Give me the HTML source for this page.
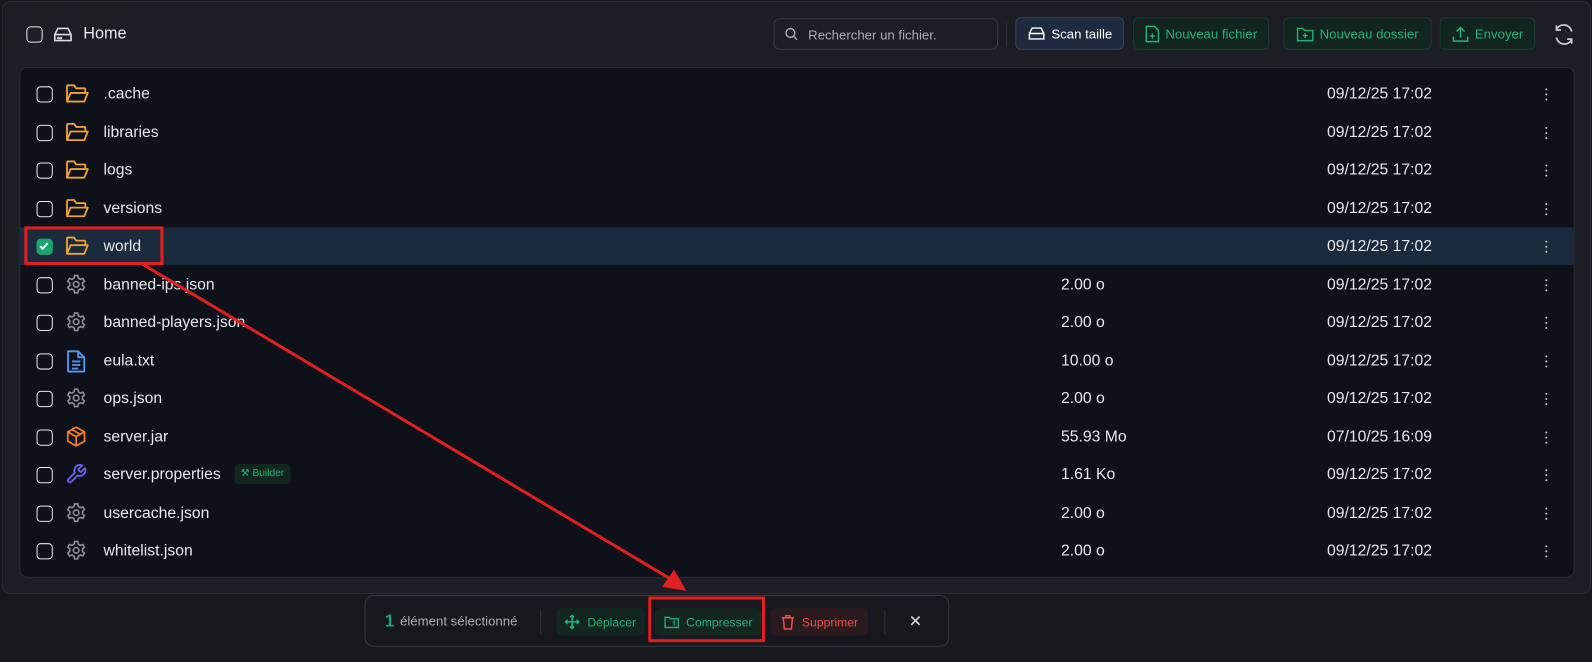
<!DOCTYPE html>
<html><head><meta charset="utf-8"><style>
*{box-sizing:border-box;margin:0;padding:0}
body{width:1592px;height:652px;background:#16181b;font-family:"Liberation Sans",sans-serif;color:#e6e8ec;position:relative;overflow:hidden}
#w{position:absolute;left:0;top:0;width:1568px;height:642px;transform:scale(1.0153);transform-origin:0 0}
.panel{position:absolute;left:2px;top:1px;width:1565px;height:584px;background:#1b1e24;border:1px solid #262a32;border-radius:8px}
.cb{position:absolute;width:16px;height:16px;border:1.5px solid #e6e8ec;border-radius:4px}
.list{position:absolute;left:19px;top:66px;width:1532px;height:503px;background:#0e111a;border:1px solid #262b35;border-radius:8px}
.row{position:absolute;left:0;width:1530px;height:37px;font-size:15.5px}
.row .cb{left:16px;top:11px}
.row .ic{position:absolute;left:44px;top:7px}
.row .nm{position:absolute;left:82px;top:10px}
.row .sz{position:absolute;left:1025px;top:10px}
.row .dt{position:absolute;left:1287px;top:10px}
.row .dots{position:absolute;left:1502px;top:13px;width:3px}
.dots i{display:block;width:2px;height:2px;background:#c0c4cc;margin:0 0 3px 0;border-radius:1px}
.sel{background:#1c2a3e}
.btn{position:absolute;top:17px;height:32px;border-radius:5px;font-size:13px;display:flex;align-items:center;justify-content:center;gap:6px}
.g{background:#12261f;border:1px solid #1d3a2e;color:#22b27a}
.bar{position:absolute;left:359px;top:586px;width:576px;height:51px;border:1px solid #333a46;border-radius:9px;background:#16181d}
.bb{position:absolute;top:12px;height:27px;border-radius:5px;font-size:12px;display:flex;align-items:center;justify-content:center;gap:7px}
</style></head><body><div id="w">
<div class="panel"></div>
<div class="cb" style="left:26px;top:26px"></div>
<svg style="position:absolute;left:52px;top:25px" width="20" height="18" viewBox="0 0 20 18" fill="none" stroke="#d8dbe0" stroke-width="1.6"><path d="M2 9 L5 3 H15 L18 9 V15 H2 Z M2 9 H18"/><circle cx="5.5" cy="12.5" r=".5"/><circle cx="8" cy="12.5" r=".5"/></svg>
<div style="position:absolute;left:82px;top:25px;font-size:16px">Home</div>

<div style="position:absolute;left:762px;top:18px;width:221px;height:31px;border:1px solid #353b46;border-radius:6px;background:#1b1e24;font-size:13px;color:#a8adb6;padding:8px 0 0 33px">Rechercher un fichier.</div>
<svg style="position:absolute;left:773px;top:27px" width="13" height="13" viewBox="0 0 13 13" fill="none" stroke="#a8adb6" stroke-width="1.4"><circle cx="5.5" cy="5.5" r="4.3"/><path d="M9 9l3 3"/></svg>
<div style="position:absolute;left:991px;top:22px;width:1px;height:24px;background:#2c313a"></div>
<div class="btn" style="left:1000px;width:107px;background:#1e2a3e;border:1px solid #334258;color:#fff">
<svg width="18" height="16" viewBox="0 0 20 18" fill="none" stroke="#fff" stroke-width="1.6"><path d="M2 9 L5 3 H15 L18 9 V15 H2 Z M2 9 H18"/></svg>Scan taille</div>
<div class="btn g" style="left:1116px;width:134px">
<svg width="14" height="17" viewBox="0 0 14 17" fill="none" stroke="#22b27a" stroke-width="1.4"><path d="M1 1H9L13 5V16H1Z M7 8V13 M4.5 10.5H9.5"/></svg>Nouveau fichier</div>
<div class="btn g" style="left:1264px;width:146px">
<svg width="17" height="15" viewBox="0 0 17 15" fill="none" stroke="#22b27a" stroke-width="1.4"><path d="M1 2H6L8 4H16V14H1Z M8.5 6.5V11.5 M6 9H11"/></svg>Nouveau dossier</div>
<div class="btn g" style="left:1418px;width:94px">
<svg width="17" height="17" viewBox="0 0 17 17" fill="none" stroke="#22b27a" stroke-width="1.5"><path d="M8.5 12V2 M4.5 6l4-4 4 4 M1.5 11v4.5h14V11"/></svg>Envoyer</div>
<svg style="position:absolute;left:1529px;top:22px" width="23" height="24" viewBox="0 0 23 24" fill="none" stroke="#c8ccd4" stroke-width="1.7"><path d="M19 9A8 8 0 0 0 4 7 M4 3v4.5h4.5 M4 15a8 8 0 0 0 15 2 M19 21v-4.5h-4.5"/></svg>

<div class="list">
<div class="row" style="top:7px"><div class="cb"></div><svg class="ic" width="24" height="22" viewBox="0 0 24 22" fill="none" stroke="#f0a332" stroke-width="1.8" stroke-linejoin="round"><path d="M2 19V4a1 1 0 0 1 1-1h6l2 3h8a1 1 0 0 1 1 1v3 M2 19l3.5-8.5h17L19 19Z"/></svg><span class="nm">.cache</span><span class="dt">09/12/25 17:02</span><span class="dots"><i></i><i></i><i></i></span></div>
<div class="row" style="top:44.5px"><div class="cb"></div><svg class="ic" width="24" height="22" viewBox="0 0 24 22" fill="none" stroke="#f0a332" stroke-width="1.8" stroke-linejoin="round"><path d="M2 19V4a1 1 0 0 1 1-1h6l2 3h8a1 1 0 0 1 1 1v3 M2 19l3.5-8.5h17L19 19Z"/></svg><span class="nm">libraries</span><span class="dt">09/12/25 17:02</span><span class="dots"><i></i><i></i><i></i></span></div>
<div class="row" style="top:82px"><div class="cb"></div><svg class="ic" width="24" height="22" viewBox="0 0 24 22" fill="none" stroke="#f0a332" stroke-width="1.8" stroke-linejoin="round"><path d="M2 19V4a1 1 0 0 1 1-1h6l2 3h8a1 1 0 0 1 1 1v3 M2 19l3.5-8.5h17L19 19Z"/></svg><span class="nm">logs</span><span class="dt">09/12/25 17:02</span><span class="dots"><i></i><i></i><i></i></span></div>
<div class="row" style="top:119.5px"><div class="cb"></div><svg class="ic" width="24" height="22" viewBox="0 0 24 22" fill="none" stroke="#f0a332" stroke-width="1.8" stroke-linejoin="round"><path d="M2 19V4a1 1 0 0 1 1-1h6l2 3h8a1 1 0 0 1 1 1v3 M2 19l3.5-8.5h17L19 19Z"/></svg><span class="nm">versions</span><span class="dt">09/12/25 17:02</span><span class="dots"><i></i><i></i><i></i></span></div>
<div class="row sel" style="top:157px"><div class="cb" style="background:#1aa56f;border-color:#1aa56f"><svg width="13" height="13" viewBox="0 0 13 13" style="position:absolute;left:0;top:0" fill="none" stroke="#fff" stroke-width="1.8"><path d="M2.5 6.5l2.5 2.5 5-5.5"/></svg></div><svg class="ic" width="24" height="22" viewBox="0 0 24 22" fill="none" stroke="#f0a332" stroke-width="1.8" stroke-linejoin="round"><path d="M2 19V4a1 1 0 0 1 1-1h6l2 3h8a1 1 0 0 1 1 1v3 M2 19l3.5-8.5h17L19 19Z"/></svg><span class="nm">world</span><span class="dt">09/12/25 17:02</span><span class="dots"><i></i><i></i><i></i></span></div>
<div class="row" style="top:194.5px"><div class="cb"></div><svg class="ic" width="22" height="22" viewBox="0 0 24 24" fill="none" stroke="#8d929b" stroke-width="1.7"><path d="M10.3 2.6h3.4l.6 2.8 2.2 1.3 2.7-.9 1.7 2.9-2.1 1.9v2.6l2.1 1.9-1.7 2.9-2.7-.9-2.2 1.3-.6 2.8h-3.4l-.6-2.8-2.2-1.3-2.7.9-1.7-2.9 2.1-1.9v-2.6L3.1 8.7l1.7-2.9 2.7.9 2.2-1.3Z"/><circle cx="12" cy="12" r="3"/></svg><span class="nm">banned-ips.json</span><span class="sz">2.00 o</span><span class="dt">09/12/25 17:02</span><span class="dots"><i></i><i></i><i></i></span></div>
<div class="row" style="top:232px"><div class="cb"></div><svg class="ic" width="22" height="22" viewBox="0 0 24 24" fill="none" stroke="#8d929b" stroke-width="1.7"><path d="M10.3 2.6h3.4l.6 2.8 2.2 1.3 2.7-.9 1.7 2.9-2.1 1.9v2.6l2.1 1.9-1.7 2.9-2.7-.9-2.2 1.3-.6 2.8h-3.4l-.6-2.8-2.2-1.3-2.7.9-1.7-2.9 2.1-1.9v-2.6L3.1 8.7l1.7-2.9 2.7.9 2.2-1.3Z"/><circle cx="12" cy="12" r="3"/></svg><span class="nm">banned-players.json</span><span class="sz">2.00 o</span><span class="dt">09/12/25 17:02</span><span class="dots"><i></i><i></i><i></i></span></div>
<div class="row" style="top:269.5px"><div class="cb"></div><svg class="ic" width="22" height="24" viewBox="0 0 22 24" fill="none" stroke="#4f9cf5" stroke-width="1.8" stroke-linejoin="round"><path d="M3 2h10l6 6v13a1 1 0 0 1-1 1H4a1 1 0 0 1-1-1Z M13 2v6h6 M7 12h8 M7 15.5h8 M7 19h6"/></svg><span class="nm">eula.txt</span><span class="sz">10.00 o</span><span class="dt">09/12/25 17:02</span><span class="dots"><i></i><i></i><i></i></span></div>
<div class="row" style="top:307px"><div class="cb"></div><svg class="ic" width="22" height="22" viewBox="0 0 24 24" fill="none" stroke="#8d929b" stroke-width="1.7"><path d="M10.3 2.6h3.4l.6 2.8 2.2 1.3 2.7-.9 1.7 2.9-2.1 1.9v2.6l2.1 1.9-1.7 2.9-2.7-.9-2.2 1.3-.6 2.8h-3.4l-.6-2.8-2.2-1.3-2.7.9-1.7-2.9 2.1-1.9v-2.6L3.1 8.7l1.7-2.9 2.7.9 2.2-1.3Z"/><circle cx="12" cy="12" r="3"/></svg><span class="nm">ops.json</span><span class="sz">2.00 o</span><span class="dt">09/12/25 17:02</span><span class="dots"><i></i><i></i><i></i></span></div>
<div class="row" style="top:344.5px"><div class="cb"></div><svg class="ic" width="22" height="22" viewBox="0 0 24 24" fill="none" stroke="#f57c1f" stroke-width="1.9" stroke-linejoin="round"><path d="M12 2l9 5v10l-9 5-9-5V7Z M3 7l9 5 9-5 M12 12v10 M7.5 4.5l9 5"/></svg><span class="nm">server.jar</span><span class="sz">55.93 Mo</span><span class="dt">07/10/25 16:09</span><span class="dots"><i></i><i></i><i></i></span></div>
<div class="row" style="top:382px"><div class="cb"></div><svg class="ic" width="22" height="22" viewBox="0 0 24 24" fill="none" stroke="#6d62f0" stroke-width="1.9" stroke-linejoin="round"><path d="M14.7 6.3a1 1 0 0 0 0 1.4l1.6 1.6a1 1 0 0 0 1.4 0l3.8-3.8a6 6 0 0 1-7.9 7.9l-6.9 6.9a2.1 2.1 0 0 1-3-3l6.9-6.9a6 6 0 0 1 7.9-7.9Z"/></svg><span class="nm">server.properties</span><span style="position:absolute;left:211px;top:8px;height:20px;padding:0 6px;background:#12261f;border-radius:4px;color:#22b27a;font-size:10px;line-height:20px">⚒ Builder</span><span class="sz">1.61 Ko</span><span class="dt">09/12/25 17:02</span><span class="dots"><i></i><i></i><i></i></span></div>
<div class="row" style="top:419.5px"><div class="cb"></div><svg class="ic" width="22" height="22" viewBox="0 0 24 24" fill="none" stroke="#8d929b" stroke-width="1.7"><path d="M10.3 2.6h3.4l.6 2.8 2.2 1.3 2.7-.9 1.7 2.9-2.1 1.9v2.6l2.1 1.9-1.7 2.9-2.7-.9-2.2 1.3-.6 2.8h-3.4l-.6-2.8-2.2-1.3-2.7.9-1.7-2.9 2.1-1.9v-2.6L3.1 8.7l1.7-2.9 2.7.9 2.2-1.3Z"/><circle cx="12" cy="12" r="3"/></svg><span class="nm">usercache.json</span><span class="sz">2.00 o</span><span class="dt">09/12/25 17:02</span><span class="dots"><i></i><i></i><i></i></span></div>
<div class="row" style="top:457px"><div class="cb"></div><svg class="ic" width="22" height="22" viewBox="0 0 24 24" fill="none" stroke="#8d929b" stroke-width="1.7"><path d="M10.3 2.6h3.4l.6 2.8 2.2 1.3 2.7-.9 1.7 2.9-2.1 1.9v2.6l2.1 1.9-1.7 2.9-2.7-.9-2.2 1.3-.6 2.8h-3.4l-.6-2.8-2.2-1.3-2.7.9-1.7-2.9 2.1-1.9v-2.6L3.1 8.7l1.7-2.9 2.7.9 2.2-1.3Z"/><circle cx="12" cy="12" r="3"/></svg><span class="nm">whitelist.json</span><span class="sz">2.00 o</span><span class="dt">09/12/25 17:02</span><span class="dots"><i></i><i></i><i></i></span></div>
</div>

<div class="bar">
<span style="position:absolute;left:19px;top:15px;font-size:17px;color:#1aa56f;font-weight:bold">1</span>
<span style="position:absolute;left:34px;top:17px;font-size:13px;color:#a8adb6">élément sélectionné</span>
<div style="position:absolute;left:172px;top:14px;width:1px;height:24px;background:#2c313a"></div>
<div class="bb" style="left:188px;width:87px;background:#12261f;color:#22b27a"><svg width="15" height="15" viewBox="0 0 15 15" fill="none" stroke="#22b27a" stroke-width="1.5"><path d="M7.5 1v13 M1 7.5h13 M5.5 3l2-2 2 2 M5.5 12l2 2 2-2 M3 5.5l-2 2 2 2 M12 5.5l2 2-2 2"/></svg>Déplacer</div>
<div class="bb" style="left:285px;width:105px;background:#14261f;color:#22b27a"><svg width="15" height="13" viewBox="0 0 15 13" fill="none" stroke="#22b27a" stroke-width="1.3"><path d="M1 2h4l1.5 1.5H14V12H1Z M10 5v5"/></svg>Compresser</div>
<div class="bb" style="left:399px;width:96px;background:#2a1a1d;color:#ef4b4b"><svg width="14" height="16" viewBox="0 0 14 16" fill="none" stroke="#ef4b4b" stroke-width="1.5"><path d="M1 3.5h12 M5 3.5V1.5h4v2 M2.5 3.5l1 11h7l1-11"/></svg>Supprimer</div>
<div style="position:absolute;left:511px;top:14px;width:1px;height:24px;background:#2c313a"></div>
<span style="position:absolute;left:535px;top:15px;font-size:16px;color:#d8dbe0">✕</span>
</div>

<svg style="position:absolute;left:0;top:0" width="1592" height="652">
<rect x="25.5" y="224.5" width="134" height="35" fill="none" stroke="#e02020" stroke-width="3"/>
<rect x="640" y="589" width="112" height="42" fill="none" stroke="#e02020" stroke-width="3"/>
<line x1="140" y1="260" x2="660" y2="570" stroke="#e02020" stroke-width="3"/>
<polygon points="676,582 652,578 664,561" fill="#e02020"/>
</svg>
</div></body></html>
